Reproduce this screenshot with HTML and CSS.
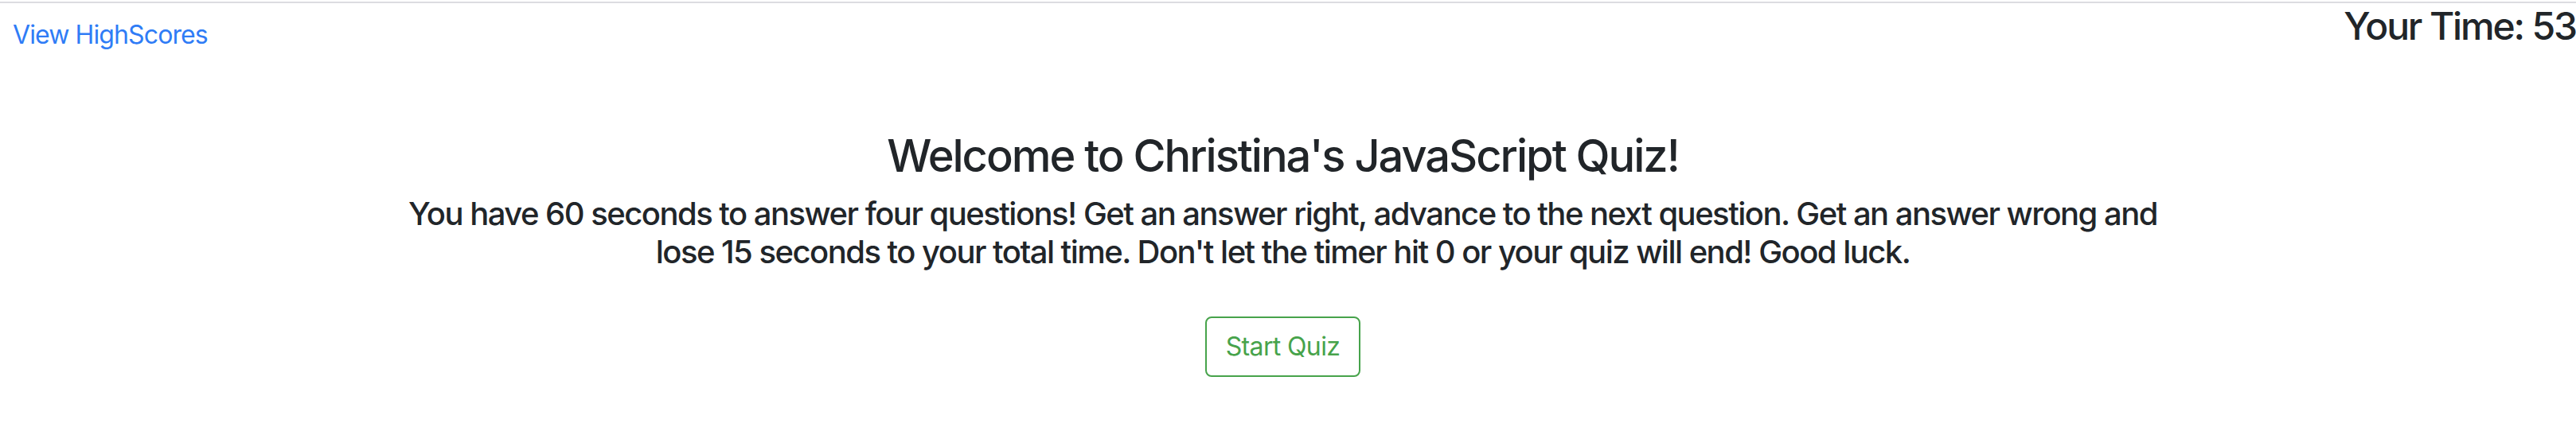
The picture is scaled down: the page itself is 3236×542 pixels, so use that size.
FILE: index.html
```html
<!DOCTYPE html>
<html lang="en">
<head>
<meta charset="utf-8">
<title>JavaScript Quiz</title>
<link rel="stylesheet" href="styles.css">
</head>
<body>
<div class="page-line"></div>
<header class="topbar">
  <a class="scores-link" href="#">View HighScores</a>
  <h4 class="timer">Your Time: 53</h4>
</header>
<main class="intro">
  <h3 class="title">Welcome to Christina's JavaScript Quiz!</h3>
  <h5 class="rules">You have 60 seconds to answer four questions! Get an answer right, advance to the next question. Get an answer wrong and lose 15 seconds to your total time. Don't let the timer hit 0 or your quiz will end! Good luck.</h5>
  <button class="start-btn" type="button">Start Quiz</button>
</main>
</body>
</html>
```
FILE: styles.css
```css
html, body {
  margin: 0;
  padding: 0;
  background: #ffffff;
}
body {
  font-family: Inter, "Noto Sans", sans-serif;
  color: #212529;
}
.page-line {
  margin-top: 2px;
  height: 2px;
  background: #dcdce1;
}
.topbar {
  display: flex;
  justify-content: space-between;
  align-items: flex-start;
  padding: 0 0 0 16px;
}
.scores-link {
  padding-top: 16px;
  font-size: 32px;
  line-height: 48px;
  letter-spacing: -0.028em;
  color: #2f7cf6;
  text-decoration: none;
}
.timer {
  margin: 0;
  font-size: 48px;
  line-height: 57.6px;
  font-weight: 500;
  letter-spacing: -0.045em;
}
.intro {
  display: flex;
  flex-direction: column;
  align-items: center;
  text-align: center;
  padding-right: 13px;
}
.title {
  margin: 95px 0 15px;
  font-size: 56px;
  line-height: 67.2px;
  font-weight: 500;
  letter-spacing: -0.036em;
}
.rules {
  margin: 0;
  max-width: 2250px;
  font-size: 40px;
  line-height: 48px;
  font-weight: 500;
  letter-spacing: -0.038em;
}
.start-btn {
  margin-top: 57px;
  padding: 12px 24px;
  border: 2px solid #47a34b;
  border-radius: 8px;
  background: #ffffff;
  color: #47a34b;
  font-family: inherit;
  font-size: 32px;
  line-height: 48px;
  letter-spacing: -0.02em;
  cursor: pointer;
}
```
